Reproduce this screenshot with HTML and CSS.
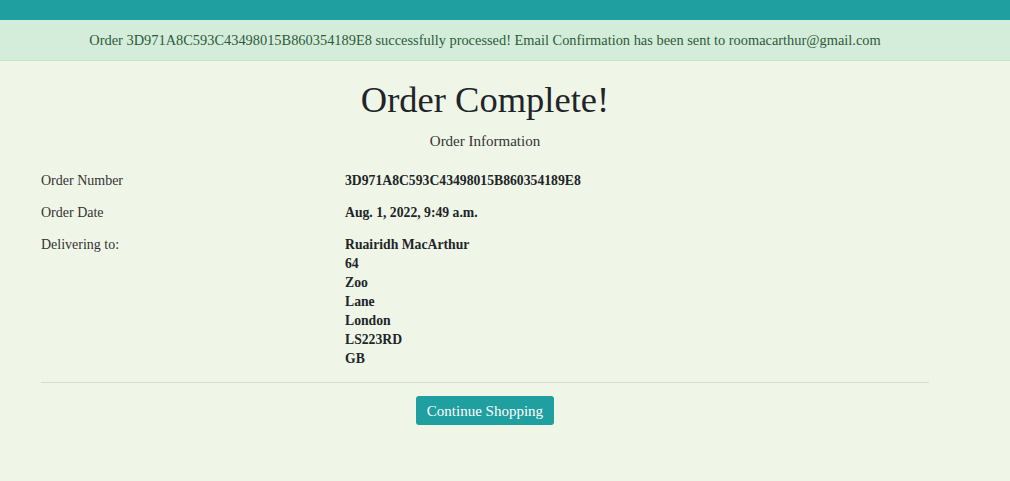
FILE: index.html
```html
<!DOCTYPE html>
<html lang="en">
<head>
<meta charset="utf-8">
<title>Order Complete</title>
<link rel="stylesheet" href="styles.css">
</head>
<body>
<header class="topbar"></header>
<div class="alert"><div class="alert-inner">Order 3D971A8C593C43498015B860354189E8 successfully processed! Email Confirmation has been sent to roomacarthur@gmail.com</div></div>
<main class="container">
  <h1 class="title">Order Complete!</h1>
  <p class="subtitle">Order Information</p>
  <div class="info">
    <div class="label">Order Number</div>
    <div class="value">3D971A8C593C43498015B860354189E8</div>
    <div class="label">Order Date</div>
    <div class="value">Aug. 1, 2022, 9:49 a.m.</div>
    <div class="label">Delivering to:</div>
    <div class="value address">
      <span>Ruairidh MacArthur</span>
      <span>64</span>
      <span>Zoo</span>
      <span>Lane</span>
      <span>London</span>
      <span>LS223RD</span>
      <span>GB</span>
    </div>
  </div>
  <hr class="divider">
  <div class="actions"><a class="btn" href="#">Continue Shopping</a></div>
</main>
</body>
</html>
```

FILE: styles.css
```css
* { box-sizing: border-box; }
html, body { margin: 0; padding: 0; }
body {
  background: #f0f6e7;
  font-family: "Liberation Serif", "DejaVu Serif", serif;
  color: #212529;
  height: 481px;
}
.topbar { height: 20px; background: #1f9f9f; }
.alert {
  height: 41px;
  background: #d4edda;
  border-bottom: 1px solid #c3e6cb;
  color: #2f5a3a;
  font-size: 14.4px;
  display: flex;
  align-items: center;
  padding-top: 1px;
}
.alert-inner { width: 888px; margin-left: 41px; text-align: center; }
.container { width: 888px; margin: 0 0 0 41px; }
.title {
  margin: 19px 0 0;
  text-align: center;
  font-weight: 400;
  font-size: 36.5px;
  line-height: 40px;
}
.subtitle {
  margin: 11px 0 0;
  text-align: center;
  font-size: 15px;
  line-height: 20px;
  color: #333;
}
.info {
  margin-top: 20px;
  display: grid;
  grid-template-columns: 304px 1fr;
  row-gap: 13px;
  font-size: 14px;
  line-height: 19px;
}
.label { color: #333; }
.value { font-weight: 700; color: #212529; font-size: 13.7px; }
.address { display: flex; flex-direction: column; }
.divider { margin: 14px 0 0; border: 0; border-top: 1px solid #d6dccf; }
.actions { display: flex; justify-content: center; margin-top: 13px; }
.btn {
  display: inline-block;
  background: #1f9f9f;
  color: #fff;
  text-decoration: none;
  font-size: 15px;
  line-height: 20px;
  padding: 5px 11px 4px;
  border-radius: 3px;
}
```
